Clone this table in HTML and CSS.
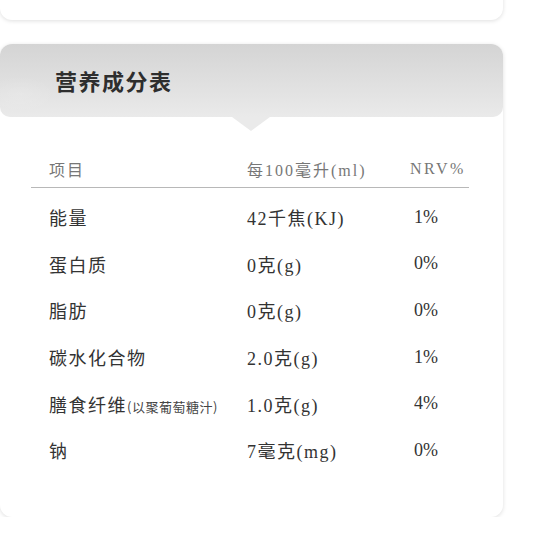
FILE: index.html
```html
<!DOCTYPE html>
<html lang="zh-CN">
<head>
<meta charset="utf-8">
<title>营养成分表</title>
<link rel="stylesheet" href="styles.css">
</head>
<body>
<div class="page">
  <div class="card card-top"></div>
  <section class="card nutrition">
    <header class="nut-head">
      <h2 class="nut-title">营养成分表</h2>
    </header>
    <div class="nut-table">
      <div class="row row-head">
        <span class="c1">项目</span>
        <span class="c2">每100毫升(ml)</span>
        <span class="c3 nrv">NRV%</span>
      </div>
      <div class="rows">
        <div class="row"><span class="c1">能量</span><span class="c2">42千焦(KJ)</span><span class="c3">1%</span></div>
        <div class="row"><span class="c1">蛋白质</span><span class="c2">0克(g)</span><span class="c3">0%</span></div>
        <div class="row"><span class="c1">脂肪</span><span class="c2">0克(g)</span><span class="c3">0%</span></div>
        <div class="row"><span class="c1">碳水化合物</span><span class="c2">2.0克(g)</span><span class="c3">1%</span></div>
        <div class="row"><span class="c1">膳食纤维<small class="note">(以聚葡萄糖汁)</small></span><span class="c2">1.0克(g)</span><span class="c3">4%</span></div>
        <div class="row"><span class="c1">钠</span><span class="c2">7毫克(mg)</span><span class="c3">0%</span></div>
      </div>
    </div>
  </section>
</div>
</body>
</html>
```

FILE: styles.css
```css
* { box-sizing: border-box; }

html, body {
  margin: 0;
  padding: 0;
  background: #ffffff;
}

body {
  font-family: "Liberation Serif", "Noto Sans CJK SC", serif;
  color: #333;
  overflow: hidden;
}

.page {
  width: 533px;
  padding: 0 30px 0 0;
}

.card {
  background: #fff;
  border-radius: 12px;
  box-shadow: 0 1px 4px rgba(0, 0, 0, 0.13);
  width: 503px;
}

.card-top {
  height: 40px;
  margin-top: -20px;
}

.nutrition {
  margin-top: 24px;
  position: relative;
  padding-bottom: 43px;
}

.nut-head {
  position: relative;
  height: 73px;
  border-radius: 12px 12px 10px 10px;
  background:
    radial-gradient(ellipse 50px 26px at 20px 50px, rgba(255,255,255,0.14), rgba(255,255,255,0) 70%),
    linear-gradient(180deg, #d4d4d4 0%, #e0e0e0 55%, #eaeaea 100%);
  display: flex;
  align-items: center;
  padding-left: 55px;
}

.nut-head::after {
  content: "";
  position: absolute;
  left: 232px;
  bottom: -14px;
  width: 0;
  height: 0;
  border-left: 19px solid transparent;
  border-right: 19px solid transparent;
  border-top: 14px solid #eaeaea;
}

.nut-title {
  margin: -2px 0 0 0;
  font-family: "Noto Sans CJK SC", sans-serif;
  font-size: 22px;
  font-weight: 700;
  letter-spacing: 1.5px;
  color: #2e2e2e;
  line-height: 1;
}

.nut-table {
  margin: 0 34px 0 31px;
  padding-top: 33px;
}

.row {
  display: grid;
  grid-template-columns: 198px 163px 1fr;
  align-items: center;
  padding-left: 18px;
  height: 46.6px;
  font-size: 18px;
  letter-spacing: 1.5px;
  color: #333;
  white-space: nowrap;
}

.row-head {
  height: 38px;
  font-size: 16px;
  letter-spacing: 2px;
  color: #777;
  border-bottom: 1px solid #b8b8b8;
}

.rows {
  padding-top: 6px;
}

.c3 {
  text-align: right;
  padding-right: 31px;
  letter-spacing: 0;
}

.row-head .c3 {
  text-align: left;
  padding-right: 0;
  letter-spacing: 2.5px;
}

.note {
  font-family: "Noto Sans CJK SC", sans-serif;
  font-size: 13px;
  letter-spacing: 0.5px;
  color: #444;
}
```
